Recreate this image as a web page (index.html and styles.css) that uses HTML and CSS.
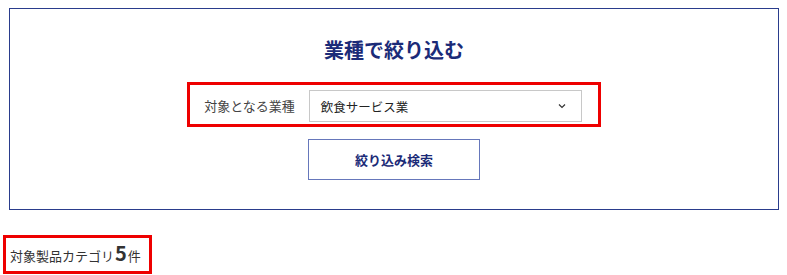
FILE: index.html
```html
<!DOCTYPE html>
<html lang="ja">
<head>
<meta charset="utf-8">
<link rel="stylesheet" href="styles.css">
</head>
<body>
<div class="page">
  <section class="panel">
    <h2 class="panel-title">業種で絞り込む</h2>
    <div class="filter-row">
      <span class="filter-label">対象となる業種</span>
      <div class="select">
        <span class="select-value">飲食サービス業</span>
        <svg class="select-chevron" width="8" height="6" viewBox="0 0 8 6"><path d="M1 1.5 L4 4.5 L7 1.5" fill="none" stroke="#333" stroke-width="1.2"/></svg>
      </div>
    </div>
    <button class="search-btn">絞り込み検索</button>
  </section>
  <div class="result">
    <span class="result-text">対象製品カテゴリ</span><span class="result-count">5</span><span class="result-text">件</span>
  </div>
</div>
</body>
</html>
```

FILE: styles.css
```css
html, body {
  margin: 0;
  padding: 0;
  background: #fff;
}
body {
  font-family: "Noto Sans CJK JP", "Noto Sans", sans-serif;
  color: #333;
}
.page {
  padding: 8px 8px 0 3px;
}
.panel {
  margin-left: 6px;
  border: 1px solid #2a3c8c;
  padding: 27px 0 29px;
  display: flex;
  flex-direction: column;
  align-items: center;
}
.panel-title {
  margin: 0;
  font-size: 20px;
  line-height: 28px;
  font-weight: 700;
  color: #1b2b78;
}
.filter-row {
  margin-top: 18px;
  border: 3px solid #ee0000;
  padding: 5px 16px 2px 14px;
  display: flex;
  align-items: center;
  gap: 14px;
}
.filter-label {
  font-size: 13px;
  color: #444;
  line-height: 32px;
}
.select {
  width: 273px;
  height: 32px;
  box-sizing: border-box;
  border: 1px solid #c8c8c8;
  display: flex;
  align-items: center;
  justify-content: space-between;
  padding: 0 15px 0 11px;
}
.select-value {
  font-size: 12.5px;
  color: #222;
}
.select-chevron {
  display: block;
}
.search-btn {
  margin-top: 12px;
  width: 172px;
  height: 41px;
  background: #fff;
  border: 1px solid #6677bb;
  font-family: inherit;
  font-size: 13px;
  font-weight: 700;
  color: #1b2b78;
  cursor: pointer;
}
.result {
  margin-top: 25px;
  display: inline-flex;
  align-items: baseline;
  border: 3px solid #ee0000;
  padding: 1px 8px 2px 4px;
  line-height: 27px;
}
.result-text {
  font-size: 13px;
  color: #333;
}
.result-count {
  font-size: 20px;
  font-weight: 700;
  color: #333;
  margin: 0 1px;
}
```
